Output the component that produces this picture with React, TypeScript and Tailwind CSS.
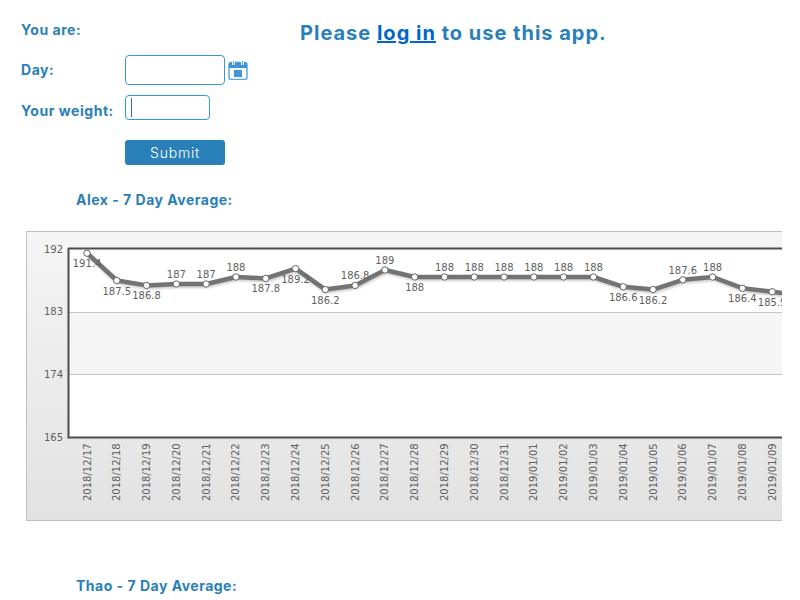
const points: [string, number, string, boolean][] = [
  ["2018/12/17", 191.4, "191.4", false],
  ["2018/12/18", 187.5, "187.5", false],
  ["2018/12/19", 186.8, "186.8", false],
  ["2018/12/20", 187, "187", true],
  ["2018/12/21", 187, "187", true],
  ["2018/12/22", 188, "188", true],
  ["2018/12/23", 187.8, "187.8", false],
  ["2018/12/24", 189.2, "189.2", false],
  ["2018/12/25", 186.2, "186.2", false],
  ["2018/12/26", 186.8, "186.8", true],
  ["2018/12/27", 189, "189", true],
  ["2018/12/28", 188, "188", false],
  ["2018/12/29", 188, "188", true],
  ["2018/12/30", 188, "188", true],
  ["2018/12/31", 188, "188", true],
  ["2019/01/01", 188, "188", true],
  ["2019/01/02", 188, "188", true],
  ["2019/01/03", 188, "188", true],
  ["2019/01/04", 186.6, "186.6", false],
  ["2019/01/05", 186.2, "186.2", false],
  ["2019/01/06", 187.6, "187.6", true],
  ["2019/01/07", 188, "188", true],
  ["2019/01/08", 186.4, "186.4", false],
  ["2019/01/09", 185.9, "185.9", false],
];

const px = (i: number) => 87 + i * 29.79;
const py = (v: number) => 249 + (192 - v) * 7;
const line = points.map((p, i) => `${px(i)},${py(p[1])}`).join(" ") + ` ${px(24)},${py(185.3)}`;

function Chart() {
  return (
    <svg width="756" height="290" viewBox="26 231 756 290" className="block" fontFamily="'DejaVu Sans', sans-serif">
      <defs>
        <linearGradient id="bg" x1="0" y1="0" x2="0" y2="1">
          <stop offset="0" stopColor="#f5f5f5" />
          <stop offset="1" stopColor="#e2e2e2" />
        </linearGradient>
        <filter id="soft" x="-5%" y="-20%" width="110%" height="140%">
          <feGaussianBlur stdDeviation="1" />
        </filter>
      </defs>
      <rect x="26.5" y="231.5" width="800" height="289" fill="url(#bg)" stroke="#c0c0c0" />
      <rect x="68" y="249" width="760" height="189" fill="#ffffff" />
      <rect x="68" y="312" width="760" height="62" fill="#f5f5f5" />
      <line x1="68" x2="790" y1="312.5" y2="312.5" stroke="#c4c4c4" />
      <line x1="68" x2="790" y1="374.5" y2="374.5" stroke="#c4c4c4" />
      <path d="M68 248.5 H790 M68.5 248 V438.5 M68 437.5 H790" stroke="#4d4d4d" strokeWidth="2" fill="none" />
      {[["192", 253], ["183", 315], ["174", 378], ["165", 441]].map(([t, y]) => (
        <text key={t} x="63" y={y} textAnchor="end" fontSize="10" fill="#606060">{t}</text>
      ))}
      <polyline points={line} transform="translate(1 1.5)" fill="none" stroke="#000000" strokeOpacity="0.2" strokeWidth="5" filter="url(#soft)" />
      <polyline points={line} fill="none" stroke="#737373" strokeWidth="4.5" strokeLinejoin="round" />
      {points.map((p, i) => (
        <circle key={p[0]} cx={px(i)} cy={py(p[1])} r="3.2" fill="#ffffff" stroke="#666666" strokeWidth="1" />
      ))}
      {points.map((p, i) => (
        <text key={p[0]} x={px(i)} y={py(p[1]) + (p[3] ? -6 : 14)} textAnchor="middle" fontSize="10" fill="#606060">{p[2]}</text>
      ))}
      {points.map((p, i) => (
        <text key={p[0]} transform={`translate(${px(i) + 3.5} 501) rotate(-90)`} fontSize="10" fill="#606060">{p[0]}</text>
      ))}
    </svg>
  );
}

function CalendarIcon() {
  return (
    <svg width="20" height="20" viewBox="0 0 20 20" className="ml-[3px] mt-[5px]">
      <rect x="1" y="2.5" width="18" height="17" rx="2" fill="#ffffff" stroke="#5aa9e6" strokeWidth="1.5" />
      <path d="M1 8 V4.5 a2 2 0 0 1 2 -2 H17 a2 2 0 0 1 2 2 V8 Z" fill="#3f94d8" />
      <rect x="4" y="0.5" width="3" height="4.5" fill="#ffffff" />
      <rect x="13" y="0.5" width="3" height="4.5" fill="#ffffff" />
      <rect x="5" y="1" width="1.2" height="4" fill="#5aa9e6" />
      <rect x="14" y="1" width="1.2" height="4" fill="#5aa9e6" />
      <rect x="6" y="10" width="8" height="7" fill="#3f94d8" />
    </svg>
  );
}

export default function App() {
  return (
    <div className="h-[600px] w-[800px] overflow-hidden bg-white font-['Inter',sans-serif] text-[#2980b9]">
      <div className="flex">
        <div className="ml-[21px] w-[279px] text-[14px] font-bold tracking-[0.55px]">
          <div className="mt-[20px] h-[20px] leading-[20px]">You are:</div>
          <div className="mt-[15px] flex">
            <label className="w-[104px] pt-[5px] leading-[20px]">Day:</label>
            <input className="h-[30px] w-[100px] rounded-[4px] border border-[#3498db] bg-white outline-none" />
            <CalendarIcon />
          </div>
          <div className="mt-[10px] flex h-[25px]">
            <label className="w-[104px] pt-[5px] leading-[21px]">Your weight:</label>
            <div className="relative h-[25px] w-[85px]">
              <input className="h-full w-full rounded-[4px] border border-[#3498db] bg-white outline-none" />
              <span className="absolute left-[6px] top-[3px] h-[19px] w-px bg-[#2c6f9f]" />
            </div>
          </div>
          <button className="ml-[104px] mt-[20px] block h-[25px] w-[100px] rounded-[3px] bg-[#2980b9] text-center text-[14px] font-light tracking-[0.8px] text-white">
            Submit
          </button>
        </div>
        <h1 className="mt-[21px] text-[20px] font-bold leading-[25px] tracking-[1px]">
          Please <a href="#" className="text-[#0066cc] underline">log in</a> to use this app.
        </h1>
      </div>
      <h2 className="ml-[76px] mt-[25px] text-[14px] font-bold leading-[20px] tracking-[0.5px]">Alex - 7 Day Average:</h2>
      <div className="ml-[26px] mt-[21px]">
        <Chart />
      </div>
      <h2 className="ml-[76px] mt-[55px] text-[14px] font-bold leading-[20px] tracking-[0.5px]">Thao - 7 Day Average:</h2>
    </div>
  );
}
